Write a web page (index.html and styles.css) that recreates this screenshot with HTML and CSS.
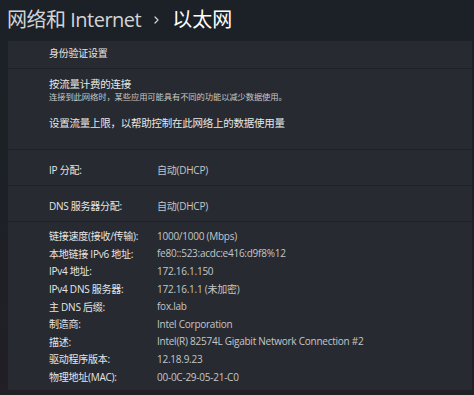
FILE: index.html
```html
<!DOCTYPE html>
<html lang="zh-CN">
<head>
<meta charset="utf-8">
<link rel="stylesheet" href="styles.css">
</head>
<body>
<div class="page">
  <header class="header">
    <span class="crumb">网络和 Internet</span>
    <svg class="chev" width="5" height="8" viewBox="0 0 5 8"><path d="M1 1 L4 4 L1 7" fill="none" stroke="#d4d6d8" stroke-width="1.2" stroke-linecap="round" stroke-linejoin="round"/></svg>
    <span class="current">以太网</span>
  </header>
  <section class="card">
    <div class="row row-auth">身份验证设置</div>
    <div class="row row-metered">
      <div class="title">按流量计费的连接</div>
      <div class="sub">连接到此网络时，某些应用可能具有不同的功能以减少数据使用。</div>
      <div class="title limit">设置流量上限，以帮助控制在此网络上的数据使用量</div>
    </div>
    <div class="row row-kv"><span class="k">IP 分配:</span><span class="v">自动(DHCP)</span></div>
    <div class="row row-kv"><span class="k">DNS 服务器分配:</span><span class="v">自动(DHCP)</span></div>
    <div class="row row-details">
      <div class="kv"><span class="k">链接速度(接收/传输):</span><span class="v">1000/1000 (Mbps)</span></div>
      <div class="kv"><span class="k">本地链接 IPv6 地址:</span><span class="v">fe80::523:acdc:e416:d9f8%12</span></div>
      <div class="kv"><span class="k">IPv4 地址:</span><span class="v">172.16.1.150</span></div>
      <div class="kv"><span class="k">IPv4 DNS 服务器:</span><span class="v">172.16.1.1 (未加密)</span></div>
      <div class="kv"><span class="k">主 DNS 后缀:</span><span class="v">fox.lab</span></div>
      <div class="kv"><span class="k">制造商:</span><span class="v">Intel Corporation</span></div>
      <div class="kv"><span class="k">描述:</span><span class="v">Intel(R) 82574L Gigabit Network Connection #2</span></div>
      <div class="kv"><span class="k">驱动程序版本:</span><span class="v">12.18.9.23</span></div>
      <div class="kv"><span class="k">物理地址(MAC):</span><span class="v">00-0C-29-05-21-C0</span></div>
    </div>
  </section>
</div>
</body>
</html>
```
FILE: styles.css
```css
html, body {
  margin: 0;
  padding: 0;
}
body {
  width: 474px;
  height: 395px;
  overflow: hidden;
  background: linear-gradient(180deg, #1b2126 0%, #1d2127 50%, #221f25 100%);
  font-family: "Open Sans", "Noto Sans CJK SC", sans-serif;
  color: #e6e6e6;
}
.page {
  display: flex;
  flex-direction: column;
}
.header {
  height: 41px;
  display: flex;
  align-items: center;
  padding-left: 7px;
  font-size: 20px;
  line-height: 1;
  box-sizing: border-box;
  padding-bottom: 2px;
}
.crumb {
  color: #d2d4d6;
  letter-spacing: -0.5px;
}
.chev {
  margin: 1px 13px 0 13px;
  flex: none;
}
.current {
  color: #ffffff;
}
.card {
  margin-left: 8px;
  margin-right: 2px;
  background: #272b31;
  display: flex;
  flex-direction: column;
  height: 349px;
  letter-spacing: -0.25px;
}
.row {
  padding-left: 41px;
  box-sizing: border-box;
  border-bottom: 1px solid #1f2328;
  font-size: 10px;
}
.row-auth {
  height: 28px;
  display: flex;
  align-items: center;
  padding-bottom: 4px;
  color: #e4e4e4;
}
.row-metered {
  height: 81px;
  padding-top: 9px;
}
.title {
  font-size: 10.5px;
  line-height: 13px;
  color: #e8e8e8;
}
.sub {
  font-size: 8.3px;
  line-height: 11px;
  color: #c8c8c8;
  letter-spacing: -0.1px;
}
.limit {
  margin-top: 15px;
}
.row-kv {
  height: 36px;
  display: flex;
  align-items: center;
  padding-top: 3px;
}
.k {
  width: 108px;
  flex: none;
  color: #e6e6e6;
}
.v {
  color: #c4c6c8;
}
.row-details {
  border-bottom: none;
  padding-top: 5px;
  flex: 1;
}
.kv {
  display: flex;
  height: 17.6px;
  align-items: center;
}
```
